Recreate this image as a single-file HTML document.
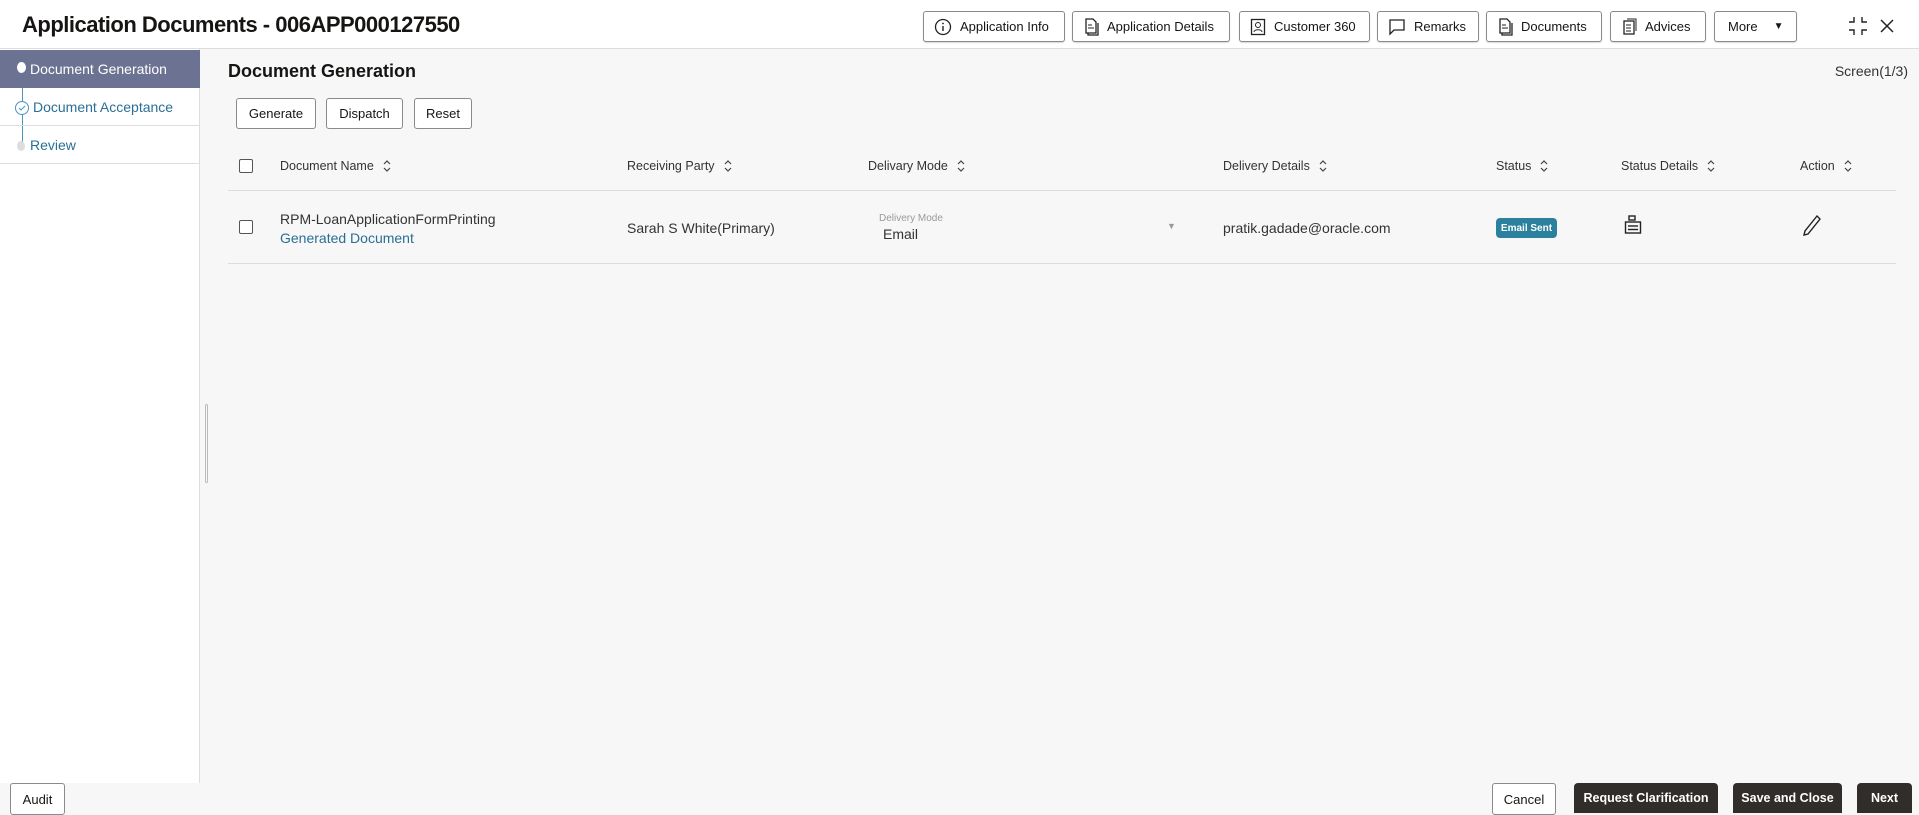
<!DOCTYPE html>
<html><head><meta charset="utf-8"><style>
*{box-sizing:border-box;margin:0;padding:0}
body{width:1919px;height:813px;overflow:hidden;font-family:"Liberation Sans",sans-serif;background:#f7f7f7;color:#161513;position:relative}
.hdr{position:absolute;left:0;top:0;width:1919px;height:49px;background:#fff;border-bottom:1px solid #ddd}
.title{position:absolute;left:22px;top:12px;font-size:22px;font-weight:bold;letter-spacing:-0.5px}
.hb{position:absolute;top:11px;height:31px;border:1px solid #8a8a8a;border-radius:3px;background:#fff;font-size:13px;display:flex;align-items:center;padding-left:10px;gap:8px;box-shadow:0 1px 1px rgba(0,0,0,.15)}
.hb svg{flex:none}
.side{position:absolute;left:0;top:49px;width:200px;height:734px;background:#fff;border-right:1px solid #ddd}
.si{position:absolute;left:0;width:200px;height:38px;font-size:14px;color:#2a6f93;padding-left:32px;border-bottom:1px solid #ddd;display:flex;align-items:center}
.si.act{background:#6c7291;color:#fff;border:none}
.btn{position:absolute;height:31px;border:1px solid #8a8a8a;border-radius:3px;background:#fff;font-size:13px;display:flex;align-items:center;justify-content:center}
.th{position:absolute;top:159px;font-size:12.5px;color:#333;display:flex;align-items:center}
.th svg{margin-left:9px}
.cb{position:absolute;width:14px;height:14px;border:1px solid #555;border-radius:2px;background:#fff}
.td{position:absolute;font-size:14px;color:#333}
.dk{position:absolute;top:783px;height:30px;background:#312d2a;color:#fff;font-weight:bold;font-size:12.5px;border-radius:4px 4px 0 0;display:flex;align-items:center;justify-content:center}
</style></head><body>
<svg width="0" height="0" style="position:absolute"><defs><symbol id="s" viewBox="0 0 8 14"><path d="M1 5l3-3 3 3M1 9l3 3 3-3" fill="none" stroke="#444" stroke-width="1.2"/></symbol></defs></svg>
<div class="hdr">
<div class="title">Application Documents - 006APP000127550</div>
<div class="hb" style="left:923px;width:142px"><svg width="18" height="18" viewBox="0 0 18 18"><circle cx="9" cy="9" r="7.5" fill="none" stroke="#222" stroke-width="1.3"/><line x1="9" y1="8" x2="9" y2="13" stroke="#222" stroke-width="1.4"/><circle cx="9" cy="5.5" r="0.9" fill="#222"/></svg>Application Info</div>
<div class="hb" style="left:1072px;width:158px"><svg width="16" height="18" viewBox="0 0 16 18"><path d="M3 1h7l3 3v11H3z M5 15v2h10V5" fill="none" stroke="#222" stroke-width="1.3"/><line x1="5" y1="7" x2="9" y2="7" stroke="#222"/><line x1="5" y1="10" x2="11" y2="10" stroke="#222"/></svg>Application Details</div>
<div class="hb" style="left:1239px;width:131px"><svg width="16" height="18" viewBox="0 0 16 18"><rect x="1.5" y="1.5" width="13" height="15" fill="none" stroke="#222" stroke-width="1.3"/><circle cx="8" cy="7" r="2.5" fill="none" stroke="#222"/><path d="M4 14c0-3 8-3 8 0" fill="none" stroke="#222"/></svg>Customer 360</div>
<div class="hb" style="left:1377px;width:102px"><svg width="18" height="18" viewBox="0 0 18 18"><path d="M2 2h14v10H6l-4 4z" fill="none" stroke="#222" stroke-width="1.3"/></svg>Remarks</div>
<div class="hb" style="left:1486px;width:116px"><svg width="16" height="18" viewBox="0 0 16 18"><path d="M3 1h7l3 3v11H3z M5 15v2h10V5" fill="none" stroke="#222" stroke-width="1.3"/><line x1="5" y1="7" x2="9" y2="7" stroke="#222"/><line x1="5" y1="10" x2="11" y2="10" stroke="#222"/></svg>Documents</div>
<div class="hb" style="left:1610px;width:96px"><svg width="16" height="18" viewBox="0 0 16 18"><rect x="3" y="3" width="10" height="13" fill="none" stroke="#222" stroke-width="1.3"/><path d="M6 1h9v12" fill="none" stroke="#222"/><line x1="5" y1="7" x2="10" y2="7" stroke="#222"/><line x1="5" y1="10" x2="10" y2="10" stroke="#222"/><line x1="5" y1="13" x2="10" y2="13" stroke="#222"/></svg>Advices</div>
<div class="hb" style="left:1714px;width:83px;padding-left:13px;gap:16px">More<span style="font-size:10px">▼</span></div>
<svg style="position:absolute;left:1848px;top:16px" width="20" height="20" viewBox="0 0 20 20"><path d="M6 1v5H1M14 1v5h5M6 19v-5H1M14 19v-5h5" fill="none" stroke="#222" stroke-width="1.4"/></svg>
<svg style="position:absolute;left:1880px;top:19px" width="14" height="14" viewBox="0 0 14 14"><path d="M1 1l12 12M13 1L1 13" stroke="#222" stroke-width="1.5"/></svg>
</div>
<div class="side">
<div class="si act" style="top:1px;padding-left:30px"><span style="position:absolute;left:17px;top:12px;width:9px;height:11px;border-radius:50%;background:#fff"></span>Document Generation</div>
<div style="position:absolute;left:22px;top:39px;width:1px;height:62px;background:#4a95c0"></div>
<div class="si" style="top:39px;padding-left:33px"><svg style="position:absolute;left:14px;top:12px" width="16" height="16" viewBox="0 0 16 16"><circle cx="8" cy="8" r="6.5" fill="#fff" stroke="#4a95c0"/><path d="M5 8l2 2 4-4" fill="none" stroke="#4a95c0"/></svg>Document Acceptance</div>
<div class="si" style="top:77px;padding-left:30px"><span style="position:absolute;left:17px;top:15px;width:8px;height:10px;border-radius:50%;background:#ddd"></span>Review</div>
</div>
<div style="position:absolute;left:205px;top:404px;width:3px;height:79px;border:1px solid #bbb;border-radius:2px"></div>
<div style="position:absolute;left:228px;top:61px;font-size:18px;font-weight:bold">Document Generation</div>
<div style="position:absolute;right:11px;top:63px;font-size:14px;color:#333">Screen(1/3)</div>
<div class="btn" style="left:236px;top:98px;width:80px">Generate</div>
<div class="btn" style="left:326px;top:98px;width:77px">Dispatch</div>
<div class="btn" style="left:414px;top:98px;width:58px">Reset</div>
<div class="cb" style="left:239px;top:159px"></div>
<div class="th" style="left:280px">Document Name<svg width="8" height="14"><use href="#s"/></svg></div>
<div class="th" style="left:627px">Receiving Party<svg width="8" height="14"><use href="#s"/></svg></div>
<div class="th" style="left:868px">Delivary Mode<svg width="8" height="14"><use href="#s"/></svg></div>
<div class="th" style="left:1223px">Delivery Details<svg width="8" height="14"><use href="#s"/></svg></div>
<div class="th" style="left:1496px">Status<svg width="8" height="14"><use href="#s"/></svg></div>
<div class="th" style="left:1621px">Status Details<svg width="8" height="14"><use href="#s"/></svg></div>
<div class="th" style="left:1800px">Action<svg width="8" height="14"><use href="#s"/></svg></div>
<div style="position:absolute;left:228px;top:190px;width:1668px;height:1px;background:#ddd"></div>
<div style="position:absolute;left:228px;top:263px;width:1668px;height:1px;background:#ddd"></div>
<div class="cb" style="left:239px;top:220px"></div>
<div class="td" style="left:280px;top:211px">RPM-LoanApplicationFormPrinting</div>
<div class="td" style="left:280px;top:230px;color:#2a6f93">Generated Document</div>
<div class="td" style="left:627px;top:220px">Sarah S White(Primary)</div>
<div class="td" style="left:879px;top:213px;font-size:10px;color:#999">Delivery Mode</div>
<div class="td" style="left:883px;top:226px">Email</div>
<div class="td" style="left:1167px;top:221px;font-size:9px;color:#999">▼</div>
<div class="td" style="left:1223px;top:220px">pratik.gadade@oracle.com</div>
<div style="position:absolute;left:1496px;top:218px;width:61px;height:20px;background:#2b809e;border-radius:4px;color:#fff;font-size:10px;font-weight:bold;display:flex;align-items:center;justify-content:center">Email Sent</div>
<svg style="position:absolute;left:1624px;top:215px" width="18" height="20" viewBox="0 0 18 20"><rect x="5" y="1" width="6" height="4" fill="none" stroke="#222" stroke-width="1.4"/><rect x="1.5" y="7" width="15" height="11" fill="none" stroke="#222" stroke-width="1.4"/><line x1="4" y1="11" x2="14" y2="11" stroke="#222" stroke-width="1.4"/><line x1="4" y1="14.5" x2="14" y2="14.5" stroke="#222" stroke-width="1.4"/></svg>
<svg style="position:absolute;left:1803px;top:214px" width="18" height="22" viewBox="0 0 18 22"><path d="M14 2l3 3L5 20l-4 1 1-4z" fill="none" stroke="#222" stroke-width="1.4"/></svg>
<div class="btn" style="left:10px;top:783px;width:55px;height:32px">Audit</div>
<div class="btn" style="left:1492px;top:783px;width:64px;height:32px">Cancel</div>
<div class="dk" style="left:1574px;width:144px">Request Clarification</div>
<div class="dk" style="left:1733px;width:109px">Save and Close</div>
<div class="dk" style="left:1857px;width:55px">Next</div>
</body></html>
